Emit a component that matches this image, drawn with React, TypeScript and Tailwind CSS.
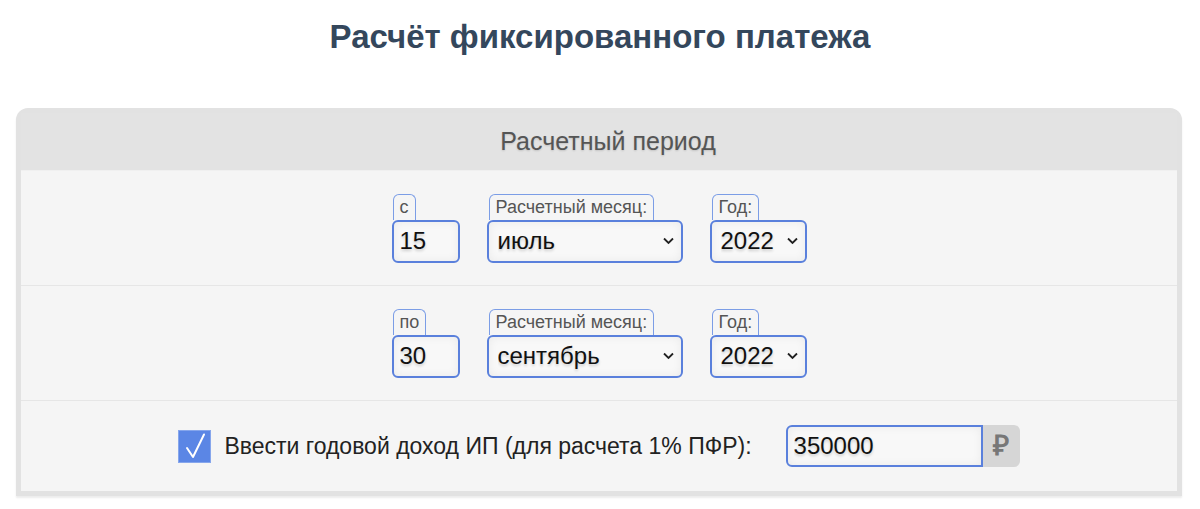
import { useState } from 'react';

const months = [
  'январь', 'февраль', 'март', 'апрель', 'май', 'июнь',
  'июль', 'август', 'сентябрь', 'октябрь', 'ноябрь', 'декабрь',
];

function Tab({ label, offset = 'ml-[2px]' }: { label: string; offset?: string }) {
  return (
    <div className={`${offset} self-start h-[26px] px-[6px] border border-b-0 border-[#7b9de6] rounded-t-[6px] text-[18px] leading-[25px] text-[#555]`}>
      {label}
    </div>
  );
}

function Chevron() {
  return (
    <svg
      className="absolute right-[9px] top-1/2 -translate-y-1/2 pointer-events-none"
      width="11"
      height="7"
      viewBox="0 0 11 7"
      fill="none"
    >
      <path d="M1 1l4.5 4.5L10 1" stroke="#222" strokeWidth="1.8" />
    </svg>
  );
}

function SelectField({
  label,
  width,
  value,
  options,
}: {
  label: string;
  width: string;
  value: string;
  options: string[];
}) {
  const [val, setVal] = useState(value);
  return (
    <div className="flex flex-col">
      <Tab label={label} />
      <div className={`relative ${width}`}>
        <select
          value={val}
          onChange={(e) => setVal(e.target.value)}
          className="appearance-none w-full h-[43px] pl-[9px] pr-[26px] border-2 border-[#5a80dc] rounded-[6px] bg-[#f8f8f8] shadow-[inset_0_0_10px_rgba(0,0,0,0.06)] text-[24px] text-[#111] [text-shadow:0_2px_3px_rgba(0,0,0,0.18)] outline-none"
        >
          {options.map((o) => (
            <option key={o} value={o}>
              {o}
            </option>
          ))}
        </select>
        <Chevron />
      </div>
    </div>
  );
}

function PeriodRow({ prefix, day, month }: { prefix: string; day: string; month: string }) {
  return (
    <div className="h-[115px] flex items-center justify-center gap-[27px] border-b border-[#e6e6e6]">
      <div className="flex flex-col">
        <Tab label={prefix} offset="ml-[1px]" />
        <input
          defaultValue={day}
          className="w-[68px] h-[43px] px-[6px] border-2 border-[#5a80dc] rounded-[6px] bg-[#f8f8f8] shadow-[inset_0_0_10px_rgba(0,0,0,0.06)] text-[24px] text-[#111] [text-shadow:0_2px_3px_rgba(0,0,0,0.18)] outline-none"
        />
      </div>
      <SelectField label="Расчетный месяц:" width="w-[196px]" value={month} options={months} />
      <SelectField label="Год:" width="w-[97px]" value="2022" options={['2021', '2022', '2023']} />
    </div>
  );
}

export default function App() {
  const [checked, setChecked] = useState(true);

  return (
    <div className="w-[1200px] h-[509px] bg-white font-['Liberation_Sans',Arial,sans-serif]">
      <h1 className="pt-[17px] h-[108px] text-center text-[33px] font-bold text-[#34475c] leading-[40px]">
        Расчёт фиксированного платежа
      </h1>

      <div className="mx-4 w-[1166px] border-[5px] border-[#e2e2e2] rounded-t-[12px] bg-[#f5f5f5] shadow-[0_2px_2px_rgba(0,0,0,0.08)]">
        {/* Header */}
        <div className="h-[58px] pl-[18px] bg-[#e3e3e3] border-b border-[#f0f0f0] flex items-center justify-center text-[25px] text-[#555] [text-shadow:0_1px_2px_rgba(0,0,0,0.15)]">
          Расчетный период
        </div>

        <PeriodRow prefix="с" day="15" month="июль" />
        <PeriodRow prefix="по" day="30" month="сентябрь" />

        {/* Income */}
        <div className="h-[90px] flex items-center justify-center">
          <button
            onClick={() => setChecked(!checked)}
            className="w-[33px] h-[33px] bg-[#5b86e5] border border-[#86a6ec] flex items-center justify-center"
          >
            {checked && (
              <svg width="22" height="26" viewBox="0 0 22 26" fill="none">
                <path d="M3 15l6 9L20 1.5" stroke="white" strokeWidth="2" strokeLinecap="round" strokeLinejoin="round" />
              </svg>
            )}
          </button>
          <span className="ml-[13px] text-[23px] text-[#222]">
            Ввести годовой доход ИП (для расчета 1% ПФР):
          </span>
          <div className="ml-[34px] flex">
            <input
              defaultValue="350000"
              className="w-[197px] h-[42px] px-[6px] border-2 border-[#5a80dc] rounded-l-[6px] bg-[#f8f8f8] shadow-[inset_0_0_10px_rgba(0,0,0,0.06)] text-[24px] text-[#111] [text-shadow:0_2px_3px_rgba(0,0,0,0.18)] outline-none"
            />
            <div className="w-[37px] h-[42px] bg-[#d6d6d6] rounded-r-[6px] flex items-center justify-center text-[28px] font-bold text-[#777]">
              ₽
            </div>
          </div>
        </div>
      </div>
    </div>
  );
}
